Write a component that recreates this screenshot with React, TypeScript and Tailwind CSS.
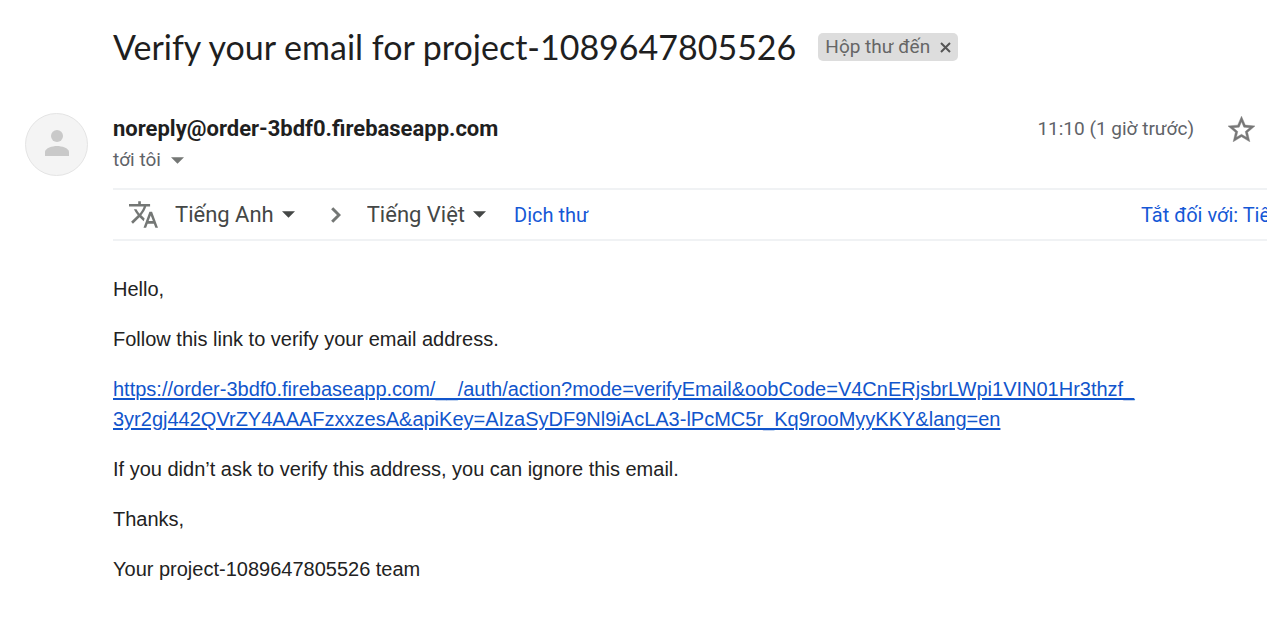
import { useState } from "react";

function Caret({ className = "" }: { className?: string }) {
  return (
    <svg className={className} width="13" height="7" viewBox="0 0 13 7" fill="currentColor" aria-hidden="true">
      <path d="M0 0.200h13L6.500 6.800z" />
    </svg>
  );
}

function LanguageSelect({ label, value, options }: { label: string; value: string; options: string[] }) {
  const [lang, setLang] = useState(value);
  return (
    <label className="flex items-center gap-2 text-[#444746]">
      <select
        aria-label={label}
        value={lang}
        onChange={(e) => setLang(e.target.value)}
        className="field-sizing-content appearance-none bg-transparent text-[22px] leading-[30px] outline-none"
      >
        {options.map((o) => (
          <option key={o}>{o}</option>
        ))}
      </select>
      <Caret />
    </label>
  );
}

function Avatar() {
  return (
    <div className="flex size-[63px] shrink-0 items-center justify-center rounded-full border border-[#e4e4e4] bg-[#f4f4f4]">
      <svg className="mb-1" width="24" height="26" viewBox="0 0 24 26" fill="#c9c9c9" aria-hidden="true">
        <circle cx="12" cy="6" r="6" />
        <path d="M0 26v-4C0 18 7.500 16 12 16s12 2 12 6v4z" />
      </svg>
    </div>
  );
}

export default function App() {
  const [starred, setStarred] = useState(false);
  return (
    <main className="min-h-screen overflow-hidden bg-white font-['Roboto','Liberation_Sans',sans-serif]">
      <header className="flex items-center gap-[22px] pt-6 pl-[113px]">
        <h1 className="font-['Lato','Open_Sans',sans-serif] text-[34px] leading-[46px] whitespace-nowrap text-[#1f1f1f]">
          Verify your email for project-1089647805526
        </h1>
        <span className="flex h-7 items-center gap-[10px] rounded-[5px] bg-[#dddddd] px-[7px] text-[19px] whitespace-nowrap text-[#666666]">
          Hộp thư đến
          <button type="button" aria-label="Xóa nhãn" className="text-[#555555]">
            <svg width="11" height="11" viewBox="0 0 11 11" fill="none" stroke="currentColor" strokeWidth="2" aria-hidden="true">
              <path d="M1 1l9 9M10 1l-9 9" />
            </svg>
          </button>
        </span>
      </header>

      <article className="mt-[43px] flex gap-[25px] pl-[25px]">
        <Avatar />
        <div className="min-w-0 flex-1">
          <div className="flex items-start justify-between pr-3">
            <div>
              <h2 className="text-[22px] leading-[32px] font-bold text-[#1f1f1f]">noreply@order-3bdf0.firebaseapp.com</h2>
              <button type="button" className="flex items-center gap-[10px] text-[19px] leading-[30px] text-[#5f6368]">
                tới tôi
                <Caret className="text-[#747775]" />
              </button>
            </div>
            <div className="flex items-center gap-[34px]">
              <time className="text-[19px] leading-[32px] text-[#5f6368]">11:10 (1 giờ trước)</time>
              <button type="button" aria-label="Gắn dấu sao" aria-pressed={starred} onClick={() => setStarred(!starred)}>
                <svg width="27" height="26" viewBox="2 2 20 19" fill="#777777" stroke="#777777" strokeWidth="0.3" aria-hidden="true">
                  <path d="M22 9.240l-7.190-.62L12 2 9.190 8.630 2 9.240l5.460 4.730L5.820 21 12 17.270 18.180 21l-1.630-7.030L22 9.240zM12 15.400l-3.760 2.270 1-4.280-3.320-2.880 4.380-.38L12 6.100l1.710 4.040 4.380.38-3.320 2.880 1 4.280L12 15.400z" />
                </svg>
              </button>
            </div>
          </div>

          <div className="mt-[13px] flex h-[53px] items-center border-y-2 border-[#f0f2f4] whitespace-nowrap">
            <svg className="ml-4 shrink-0" width="29" height="27" viewBox="1 2 22 20" fill="#747775" aria-hidden="true">
              <path d="M12.870 15.070l-2.540-2.510.03-.03c1.740-1.940 2.980-4.170 3.710-6.530H17V4h-7V2H8v2H1v1.990h11.170C11.500 7.920 10.440 9.750 9 11.350 8.070 10.320 7.300 9.190 6.690 8h-2c.73 1.630 1.730 3.170 2.980 4.560l-5.090 5.020L4 19l5-5 3.110 3.110.76-2.040zM18.500 10h-2L12 22h2l1.120-3h4.750L21 22h2l-4.500-12zm-2.620 7l1.620-4.330L19.120 17h-3.240z" />
            </svg>
            <div className="ml-[17px] flex items-center">
              <LanguageSelect label="Ngôn ngữ gốc" value="Tiếng Anh" options={["Tiếng Anh", "Tiếng Việt"]} />
              <svg className="mr-[26px] ml-9" width="10" height="16" viewBox="0 0 10 16" fill="none" stroke="#747775" strokeWidth="3" aria-hidden="true">
                <path d="M1.200 1.200L8 8l-6.800 6.800" />
              </svg>
              <LanguageSelect label="Ngôn ngữ dịch" value="Tiếng Việt" options={["Tiếng Việt", "Tiếng Anh"]} />
            </div>
            <a href="#translate" className="ml-7 text-[20px] text-[#1558d6]">
              Dịch thư
            </a>
            <a href="#turn-off" className="ml-auto w-[126px] overflow-hidden text-[20px] text-[#1558d6]">
              Tắt đối với: Tiếng Anh
            </a>
          </div>

          <div className="mt-[33px] flex flex-col gap-5 pr-[113px] font-['Liberation_Sans',Arial,sans-serif] text-[20px] leading-[30px] text-[#222222]">
            <p>Hello,</p>
            <p>Follow this link to verify your email address.</p>
            <p>
              <a
                href="#verify"
                className="text-[#1155cc] underline decoration-2 underline-offset-2"
              >
                https://order-3bdf0.firebaseapp.com/__/auth/action?mode=verifyEmail&amp;oobCode=V4CnERjsbrLWpi1VIN01Hr3thzf_
                <wbr />
                3yr2gj442QVrZY4AAAFzxxzesA&amp;apiKey=AIzaSyDF9Nl9iAcLA3-lPcMC5r_Kq9rooMyyKKY&amp;lang=en
              </a>
            </p>
            <p>If you didn’t ask to verify this address, you can ignore this email.</p>
            <p>Thanks,</p>
            <p>Your project-1089647805526 team</p>
          </div>
        </div>
      </article>
    </main>
  );
}
